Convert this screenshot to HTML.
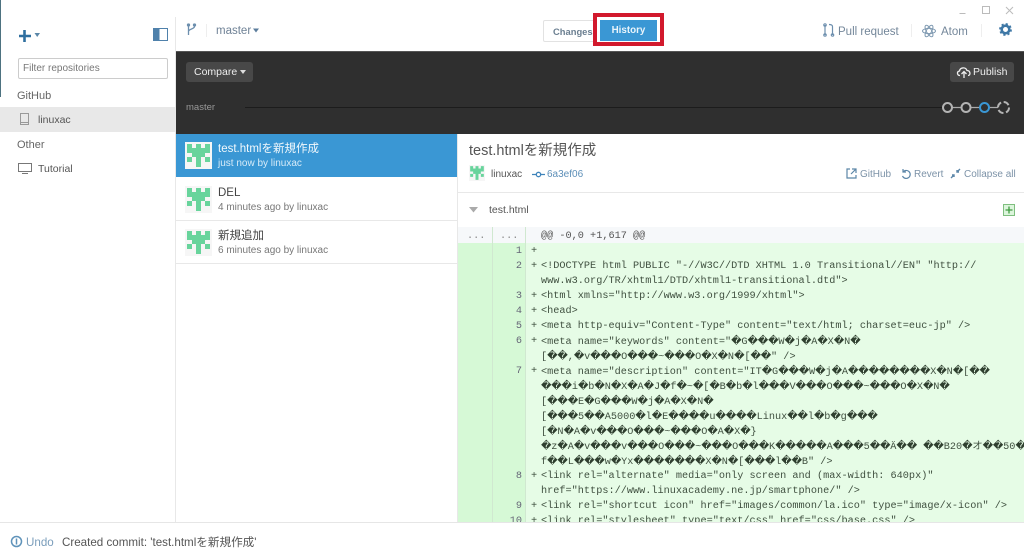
<!DOCTYPE html>
<html><head><meta charset="utf-8">
<style>
html,body{margin:0;padding:0;width:1024px;height:558px;overflow:hidden;background:#fff}
body{position:relative;font-family:"Liberation Sans","Noto Sans CJK JP",sans-serif;color:#555;font-size:11px}
.a{position:absolute;white-space:nowrap}
.m{font-family:"Liberation Mono","DejaVu Sans Mono",monospace;font-size:10.22px;line-height:15px;color:#3f4f3f}
.m i{font-family:"DejaVu Sans",sans-serif;font-style:normal;color:#2f3f2f;letter-spacing:-.2px}
.n{font-family:"Liberation Mono",monospace;font-size:10.22px;line-height:15px;color:#667;width:30px;text-align:right;left:492px}
.c{left:541px}
.p{left:531px;font-weight:normal;width:12px}
svg{position:absolute;overflow:visible}
</style></head><body>

<!-- left edge sliver -->
<div class="a" style="left:0;top:0;width:1px;height:97px;background:#4d7280"></div>

<!-- sidebar -->
<div class="a" style="left:175px;top:17px;width:1px;height:505px;background:#e8e8e8"></div>
<svg style="left:18px;top:29px" width="14" height="14"><path d="M6.5 1v12M1 7h12" stroke="#2f6f9f" stroke-width="2.6"/></svg>
<svg style="left:34px;top:32px" width="7" height="6"><path d="M0.5 1h5.5L3.2 5z" fill="#5b87a8"/></svg>
<svg style="left:153px;top:28px" width="15" height="13"><rect x="0.5" y="0.5" width="14" height="12" fill="#fff" stroke="#4f81ab"/><rect x="0.5" y="0.5" width="6" height="12" fill="#4f81ab"/></svg>
<div class="a" style="left:18px;top:58px;width:148px;height:19px;border:1px solid #ccc;border-radius:2px;font-size:10px;line-height:20px;color:#777;text-indent:4px">Filter repositories</div>
<div class="a" style="left:17px;top:89px;font-size:11px;color:#666;line-height:14px">GitHub</div>
<div class="a" style="left:0;top:107px;width:175px;height:25px;background:#e8e8e8"></div>
<svg style="left:19px;top:113px" width="11" height="13"><path d="M1.5 0.5h8v11h-8zM1.5 9.5h8" fill="none" stroke="#999"/></svg>
<div class="a" style="left:38px;top:113px;font-size:10.5px;color:#555;line-height:14px">linuxac</div>
<div class="a" style="left:17px;top:138px;font-size:11px;color:#666;line-height:14px">Other</div>
<svg style="left:18px;top:163px" width="14" height="11"><path d="M0.5 0.5h13v8h-13zM4 10.5h6" fill="none" stroke="#777"/></svg>
<div class="a" style="left:38px;top:162px;font-size:10.5px;color:#555;line-height:14px">Tutorial</div>

<!-- top bar -->
<svg style="left:186px;top:23px" width="11" height="14" fill="none" stroke="#6d8fae" stroke-width="1.3"><path d="M2.5 1v11M8.5 1v2.5c0 2.5-6 2.5-6 5"/><circle cx="2.5" cy="2" r="1"/><circle cx="8.5" cy="2" r="1"/></svg>
<div class="a" style="left:206px;top:24px;width:1px;height:13px;background:#eee"></div>
<div class="a" style="left:216px;top:24px;font-size:11.5px;color:#6f8296;line-height:14px">master</div>
<svg style="left:253px;top:28px" width="6" height="5"><path d="M0 0.5h6L3 4.5z" fill="#5b7d9c"/></svg>

<div class="a" style="left:543px;top:20px;width:54px;height:20px;border:1px solid #e2e2e2;border-radius:2px 0 0 2px;font-size:9.4px;font-weight:bold;line-height:21px;color:#6b7f91;text-indent:9px">Changes</div>
<div class="a" style="left:593px;top:13px;width:63px;height:25px;border:4px solid #d2192d;background:#fff"></div>
<div class="a" style="left:600px;top:20px;width:57px;height:21px;background:#3a97d4;text-align:center;font-size:9.8px;font-weight:bold;line-height:22px;color:#e8f4fb">History</div>
<div class="a" style="left:593px;top:13px;width:63px;height:25px;border:4px solid #d2192d"></div>

<svg style="left:959px;top:5px" width="60" height="12" fill="none" stroke="#bbb"><path d="M0.5 8.5h6"/><rect x="23.5" y="1.5" width="7" height="7"/><path d="M47 2l7 7M54 2l-7 7"/></svg>
<svg style="left:823px;top:23px" width="12" height="14" fill="none" stroke="#6d8fae" stroke-width="1.2"><path d="M2 2v10M9.5 12V3.5C9.5 2 8 1.5 6 1.5"/><circle cx="2" cy="2" r="1.2"/><circle cx="2" cy="12" r="1.2"/><circle cx="9.5" cy="12" r="1.2"/></svg>
<div class="a" style="left:838px;top:25px;font-size:11.5px;color:#74879a;line-height:14px">Pull request</div>
<div class="a" style="left:911px;top:24px;width:1px;height:13px;background:#eee"></div>
<svg style="left:922px;top:24px" width="14" height="14" fill="none" stroke="#7d98b0"><ellipse cx="7" cy="7" rx="6.5" ry="2.6" transform="rotate(60 7 7)"/><ellipse cx="7" cy="7" rx="6.5" ry="2.6" transform="rotate(120 7 7)"/><ellipse cx="7" cy="7" rx="6.5" ry="2.6"/></svg>
<div class="a" style="left:941px;top:25px;font-size:11.5px;color:#74879a;line-height:14px">Atom</div>
<div class="a" style="left:981px;top:24px;width:1px;height:13px;background:#eee"></div>
<svg style="left:999px;top:23px" width="13" height="13"><circle cx="6.5" cy="6.5" r="3.8" fill="none" stroke="#3f78a6" stroke-width="2.6"/><circle cx="6.5" cy="6.5" r="5.5" fill="none" stroke="#3f78a6" stroke-width="1.8" stroke-dasharray="2.2 2.12"/></svg>

<!-- dark band -->
<div class="a" style="left:176px;top:51px;width:848px;height:83px;background:#2f2f2f"></div>
<div class="a" style="left:176px;top:51px;width:848px;height:1px;background:#555"></div>
<div class="a" style="left:186px;top:62px;width:67px;height:20px;background:#484848;border-radius:3px;color:#eee;font-size:10.5px;line-height:20px;text-indent:8px">Compare</div>
<svg style="left:240px;top:70px" width="6" height="4"><path d="M0 0h6L3 4z" fill="#ddd"/></svg>
<div class="a" style="left:950px;top:62px;width:64px;height:20px;background:#484848;border-radius:3px;color:#eee;font-size:10.5px;line-height:20px;text-indent:23px">Publish</div>
<svg style="left:956px;top:66px" width="16" height="13" fill="none" stroke="#eee" stroke-width="1.3"><path d="M4 9.5C1 9.5 0.5 5.5 3.5 5 4 1.5 9.5 0.5 11 4.5 14.5 4.5 15 9.5 12 9.5M8 12V6M5.5 8L8 5.5 10.5 8"/></svg>
<div class="a" style="left:186px;top:101px;font-size:9.5px;color:#999;line-height:13px">master</div>
<div class="a" style="left:245px;top:107px;width:698px;height:1px;background:#1c1c1c"></div>
<svg style="left:942px;top:100px" width="72" height="15" fill="#2f2f2f" stroke-width="2">
<path d="M10 7.5h10M29 7.5h9M47 7.5h10" stroke="#aaa" stroke-width="1.2"/>
<circle cx="5.5" cy="7.5" r="4.5" stroke="#b4b4b4"/>
<circle cx="24" cy="7.5" r="4.5" stroke="#b4b4b4"/>
<circle cx="42.5" cy="7.5" r="4.5" stroke="#3a97d4"/>
<circle cx="61.5" cy="7.5" r="5.5" stroke="#b4b4b4" stroke-dasharray="6 2.64"/></svg>

<!-- commit list -->
<div class="a" style="left:176px;top:134px;width:282px;height:43px;background:#3a97d4"></div>
<div class="a" style="left:176px;top:220px;width:282px;height:1px;background:#e8e8e8"></div>
<div class="a" style="left:176px;top:263px;width:282px;height:1px;background:#e8e8e8"></div>
<div class="a" style="left:457px;top:134px;width:1px;height:388px;background:#e8e8e8"></div>

<svg width="0" height="0"><defs><g id="av"><rect width="27" height="27" fill="#f6f6f6"/><path d="M2 2h5v4H2zM11 2h5v4h-5zM20 2h5v4h-5zM2 6h23v5H2zM7 11h13v4H7zM2 15h5v5H2zM11 15h5v10h-5zM20 15h5v5h-5z" fill="#68d49c"/></g></defs></svg>
<svg style="left:185px;top:142px" width="27" height="27"><use href="#av"/></svg>
<svg style="left:185px;top:186px" width="27" height="27"><use href="#av"/></svg>
<svg style="left:185px;top:229px" width="27" height="27"><use href="#av"/></svg>

<div class="a" style="left:218px;top:141px;font-size:11.5px;line-height:16px;color:#f1f8fc">test.htmlを新規作成</div>
<div class="a" style="left:218px;top:157px;font-size:10px;line-height:14px;color:#d7ebf8">just now by linuxac</div>
<div class="a" style="left:218px;top:185px;font-size:11.5px;line-height:16px;color:#444">DEL</div>
<div class="a" style="left:218px;top:201px;font-size:10px;line-height:14px;color:#777">4 minutes ago by linuxac</div>
<div class="a" style="left:218px;top:228px;font-size:11.5px;line-height:16px;color:#444">新規追加</div>
<div class="a" style="left:218px;top:244px;font-size:10px;line-height:14px;color:#777">6 minutes ago by linuxac</div>

<!-- detail header -->
<div class="a" style="left:469px;top:142px;font-size:14.5px;line-height:19px;color:#555">test.htmlを新規作成</div>
<svg style="left:469px;top:165px" width="16" height="16" viewBox="0 0 27 27"><use href="#av"/></svg>
<div class="a" style="left:491px;top:168px;font-size:10px;line-height:14px;color:#555">linuxac</div>
<svg style="left:532px;top:171px" width="13" height="7" fill="none" stroke="#3f84bb" stroke-width="1.3"><circle cx="6.5" cy="3.5" r="2.2"/><path d="M0 3.5h4M9 3.5h4"/></svg>
<div class="a" style="left:547px;top:168px;font-size:10px;line-height:14px;color:#5d8fb8">6a3ef06</div>
<svg style="left:846px;top:168px" width="11" height="11" fill="none" stroke="#5c86a8" stroke-width="1.2"><path d="M4 1H1v9h9V7M6 1h4v4M10 1L5 6"/></svg>
<div class="a" style="left:860px;top:168px;font-size:10px;line-height:14px;color:#7d93a8">GitHub</div>
<svg style="left:900px;top:168px" width="12" height="12" fill="none" stroke="#5c86a8" stroke-width="1.2"><path d="M3 1v3h3M3 4a4 4 0 1 1-.5 4"/></svg>
<div class="a" style="left:914px;top:168px;font-size:10px;line-height:14px;color:#7d93a8">Revert</div>
<svg style="left:950px;top:168px" width="11" height="11" fill="none" stroke="#5c86a8" stroke-width="1.4"><path d="M1 10l3-3M4 9V7H2M10 1L7 4M7 2v2h2"/></svg>
<div class="a" style="left:964px;top:168px;font-size:10px;line-height:14px;color:#7d93a8">Collapse all</div>
<div class="a" style="left:458px;top:192px;width:566px;height:1px;background:#e8e8e8"></div>

<svg style="left:469px;top:207px" width="10" height="6"><path d="M0 0h9L4.5 5.5z" fill="#aaa"/></svg>
<div class="a" style="left:489px;top:203px;font-size:10.5px;line-height:14px;color:#555">test.html</div>
<svg style="left:1003px;top:204px" width="12" height="12"><rect x="0.5" y="0.5" width="11" height="11" fill="#dcf5dc" stroke="#7fbf7f"/><path d="M6 2.5v7M2.5 6h7" stroke="#3f9a3f" stroke-width="1.3"/></svg>

<!-- diff -->
<div class="a" style="left:458px;top:227px;width:566px;height:16px;background:#f6f8fa"></div>
<div class="a" style="left:458px;top:243px;width:566px;height:279px;background:#e6fce6"></div>
<div class="a" style="left:458px;top:243px;width:35px;height:279px;background:#d6f9d6"></div>
<div class="a" style="left:493px;top:243px;width:33px;height:279px;background:#d6f9d6"></div>
<div class="a" style="left:492px;top:227px;width:1px;height:295px;background:#d0e8d0"></div>
<div class="a" style="left:525px;top:227px;width:1px;height:295px;background:#d0e8d0"></div>

<div class="a m" style="left:467px;top:229px;color:#888">...</div>
<div class="a m" style="left:500px;top:229px;color:#888">...</div>
<div class="a m c" style="top:229px;color:#555">@@ -0,0 +1,617 @@</div>

<div style="position:absolute;left:0;top:0;width:1024px;height:522px;overflow:hidden">
<div style="position:absolute;left:0;top:1px;width:1024px;height:521px">
<div class="a n" style="top:243px">1</div><div class="a m p" style="top:243px">+</div>
<div class="a n" style="top:258px">2</div><div class="a m p" style="top:258px">+</div>
<div class="a m c" style="top:258px">&lt;!DOCTYPE html PUBLIC "-//W3C//DTD XHTML 1.0 Transitional//EN" "http://</div>
<div class="a m c" style="top:273px">www.w3.org/TR/xhtml1/DTD/xhtml1-transitional.dtd"&gt;</div>
<div class="a n" style="top:288px">3</div><div class="a m p" style="top:288px">+</div>
<div class="a m c" style="top:288px">&lt;html xmlns="http://www.w3.org/1999/xhtml"&gt;</div>
<div class="a n" style="top:303px">4</div><div class="a m p" style="top:303px">+</div>
<div class="a m c" style="top:303px">&lt;head&gt;</div>
<div class="a n" style="top:318px">5</div><div class="a m p" style="top:318px">+</div>
<div class="a m c" style="top:318px">&lt;meta http-equiv="Content-Type" content="text/html; charset=euc-jp" /&gt;</div>
<div class="a n" style="top:333px">6</div><div class="a m p" style="top:333px">+</div>
<div class="a m c" style="top:333px">&lt;meta name="keywords" content="<i>�</i>G<i>���</i>W<i>�</i>j<i>�</i>A<i>�</i>X<i>�</i>N<i>�</i></div>
<div class="a m c" style="top:348px">[<i>��</i>,<i>�</i>v<i>���</i>O<i>���</i>~<i>���</i>O<i>�</i>X<i>�</i>N<i>�</i>[<i>��</i>" /&gt;</div>
<div class="a n" style="top:363px">7</div><div class="a m p" style="top:363px">+</div>
<div class="a m c" style="top:363px">&lt;meta name="description" content="IT<i>�</i>G<i>���</i>W<i>�</i>j<i>�</i>A<i>��������</i>X<i>�</i>N<i>�</i>[<i>��</i></div>
<div class="a m c" style="top:378px"><i>���</i>i<i>�</i>b<i>�</i>N<i>�</i>X<i>�</i>A<i>�</i>J<i>�</i>f<i>�</i>~<i>�</i>[<i>�</i>B<i>�</i>b<i>�</i>l<i>���</i>V<i>���</i>O<i>���</i>~<i>���</i>O<i>�</i>X<i>�</i>N<i>�</i></div>
<div class="a m c" style="top:393px">[<i>���</i>E<i>�</i>G<i>���</i>W<i>�</i>j<i>�</i>A<i>�</i>X<i>�</i>N<i>�</i></div>
<div class="a m c" style="top:408px">[<i>���</i>5<i>��</i>A5000<i>�</i>l<i>�</i>E<i>����</i>u<i>����</i>Linux<i>��</i>l<i>�</i>b<i>�</i>g<i>���</i></div>
<div class="a m c" style="top:423px">[<i>�</i>N<i>�</i>A<i>�</i>v<i>���</i>O<i>���</i>~<i>���</i>O<i>�</i>A<i>�</i>X<i>�</i>}</div>
<div class="a m c" style="top:438px"><i>�</i>z<i>�</i>A<i>�</i>v<i>���</i>v<i>���</i>O<i>���</i>~<i>���</i>O<i>���</i>K<i>�����</i>A<i>���</i>5<i>��</i>Ä<i>��</i> <i>��</i>B20<i>�</i>オ<i>��</i>50<i>��</i></div>
<div class="a m c" style="top:453px">f<i>��</i>L<i>���</i>w<i>�</i>Yx<i>�������</i>X<i>�</i>N<i>�</i>[<i>���</i>l<i>��</i>B" /&gt;</div>
<div class="a n" style="top:468px">8</div><div class="a m p" style="top:468px">+</div>
<div class="a m c" style="top:468px">&lt;link rel="alternate" media="only screen and (max-width: 640px)"</div>
<div class="a m c" style="top:483px">href="https://www.linuxacademy.ne.jp/smartphone/" /&gt;</div>
<div class="a n" style="top:498px">9</div><div class="a m p" style="top:498px">+</div>
<div class="a m c" style="top:498px">&lt;link rel="shortcut icon" href="images/common/la.ico" type="image/x-icon" /&gt;</div>
<div class="a n" style="top:513px">10</div><div class="a m p" style="top:513px">+</div>
<div class="a m c" style="top:513px">&lt;link rel="stylesheet" type="text/css" href="css/base.css" /&gt;</div>
</div>
</div>

<!-- footer -->
<div class="a" style="left:0;top:522px;width:1024px;height:1px;background:#e6e6e6"></div>
<svg style="left:10px;top:535px" width="13" height="13" fill="none" stroke="#5f93ba" stroke-width="1.5"><circle cx="6.5" cy="6.5" r="5"/><path d="M6.5 3.5v6"/></svg>
<div class="a" style="left:26px;top:535px;font-size:11.6px;line-height:15px;color:#7a9dbb">Undo</div>
<div class="a" style="left:62px;top:535px;font-size:11.6px;line-height:15px;color:#555">Created commit: 'test.htmlを新規作成'</div>
</body></html>
